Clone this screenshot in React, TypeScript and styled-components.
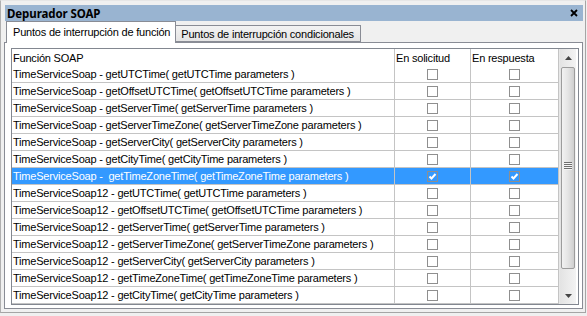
import styled, { createGlobalStyle } from "styled-components";

interface SoapRow {
    text: string
    request: boolean
    response: boolean
    selected?: boolean
}

const rows: SoapRow[] = [
    { text: "TimeServiceSoap - getUTCTime( getUTCTime parameters )", request: false, response: false },
    { text: "TimeServiceSoap - getOffsetUTCTime( getOffsetUTCTime parameters )", request: false, response: false },
    { text: "TimeServiceSoap - getServerTime( getServerTime parameters )", request: false, response: false },
    { text: "TimeServiceSoap - getServerTimeZone( getServerTimeZone parameters )", request: false, response: false },
    { text: "TimeServiceSoap - getServerCity( getServerCity parameters )", request: false, response: false },
    { text: "TimeServiceSoap - getCityTime( getCityTime parameters )", request: false, response: false },
    { text: "TimeServiceSoap -  getTimeZoneTime( getTimeZoneTime parameters )", request: true, response: true, selected: true },
    { text: "TimeServiceSoap12 - getUTCTime( getUTCTime parameters )", request: false, response: false },
    { text: "TimeServiceSoap12 - getOffsetUTCTime( getOffsetUTCTime parameters )", request: false, response: false },
    { text: "TimeServiceSoap12 - getServerTime( getServerTime parameters )", request: false, response: false },
    { text: "TimeServiceSoap12 - getServerTimeZone( getServerTimeZone parameters )", request: false, response: false },
    { text: "TimeServiceSoap12 - getServerCity( getServerCity parameters )", request: false, response: false },
    { text: "TimeServiceSoap12 - getTimeZoneTime( getTimeZoneTime parameters )", request: false, response: false },
    { text: "TimeServiceSoap12 - getCityTime( getCityTime parameters )", request: false, response: false },
];

const GlobalStyle = createGlobalStyle`
    html, body {
        margin: 0;
        padding: 0;
        background: #f0f0f0;
    }
    * {
        box-sizing: border-box;
    }
`;

const Window = styled.div`
    display: flex;
    flex-direction: column;
    width: 586px;
    height: 313px;
    padding: 4px 2px 3px 3px;
    background: #f0f0f0;
    border: 1px solid #a5a5a5;
    border-top-color: #e6e6e6;
    border-left-color: #b0b0b0;
    font-family: "Liberation Sans", Arial, sans-serif;
    font-size: 11px;
    letter-spacing: -0.2px;
    color: #000;
`;

const TitleBar = styled.div`
    display: flex;
    align-items: center;
    justify-content: space-between;
    height: 17px;
    margin-left: 1px;
    padding: 0 5px 0 2px;
    background: #99b4d1;
    font-family: "Noto Sans", "Liberation Sans", sans-serif;
    font-weight: 700;
    font-size: 11.5px;
    letter-spacing: -0.1px;
`;

const TabStrip = styled.div`
    display: flex;
    align-items: flex-end;
    height: 21px;
    padding-left: 2px;
    position: relative;
    z-index: 1;
`;

const Tab = styled.div<{ $active?: boolean }>`
    display: flex;
    align-items: center;
    height: ${p => (p.$active ? "22px" : "17px")};
    margin-bottom: ${p => (p.$active ? "-1px" : "0")};
    padding: ${p => (p.$active ? "0 5px 1px 6px" : "0 6px 0 5px")};
    border: 1px solid #898c95;
    border-bottom: ${p => (p.$active ? "none" : "1px solid #898c95")};
    border-left: ${p => (p.$active ? "1px solid #898c95" : "none")};
    background: ${p => (p.$active ? "#ffffff" : "linear-gradient(#f3f3f3, #e4e4e4)")};
    white-space: nowrap;
`;

const Panel = styled.div`
    flex: 1;
    display: flex;
    padding: 5px 3px 3px 6px;
    background: #ffffff;
    border: 1px solid #898c95;
`;

const List = styled.div`
    flex: 1;
    display: flex;
    height: 257px;
    border: 1px solid #828790;
    overflow: hidden;
`;

const Grid = styled.div`
    width: 547px;
    display: grid;
    grid-template-columns: 383px 76px 88px;
    grid-auto-rows: 17px;
    align-content: start;
`;

const HeaderCell = styled.div`
    display: flex;
    align-items: center;
    height: 18px;
    padding-left: 1px;
    border-right: 1px solid #c4c4c4;
    border-bottom: 1px solid #000;
    white-space: nowrap;
`;

const Cell = styled.div<{ $selected?: boolean; $center?: boolean }>`
    display: flex;
    align-items: center;
    justify-content: ${p => (p.$center ? "center" : "flex-start")};
    padding-left: ${p => (p.$center ? "0" : "1px")};
    border-right: 1px solid #c4c4c4;
    border-bottom: 1px solid #c4c4c4;
    background: ${p => (p.$selected ? "#3399ff" : "#ffffff")};
    color: ${p => (p.$selected ? "#ffffff" : "#000000")};
    white-space: pre;
    overflow: hidden;
`;

const Box = styled.span<{ $selected?: boolean }>`
    display: flex;
    align-items: center;
    justify-content: center;
    width: 11px;
    height: 11px;
    margin-right: 1px;
    border: 1px solid #8f8f8f;
    background: ${p => (p.$selected ? "#3399ff" : "#ffffff")};
`;

const ScrollBar = styled.div`
    width: 17px;
    display: flex;
    flex-direction: column;
    background: linear-gradient(to right, #e3e3e3, #f3f3f3);
    border-left: 1px solid #e8e8e8;
`;

const ScrollButton = styled.div`
    height: 17px;
    display: flex;
    align-items: center;
    justify-content: center;
`;

const Thumb = styled.div`
    height: 202px;
    margin: 1px 1px 0 1px;
    display: flex;
    align-items: center;
    justify-content: center;
    border: 1px solid #9c9c9c;
    border-radius: 2px;
    background: linear-gradient(to right, #f2f2f2 0%, #e4e4e4 50%, #cfcfcf 100%);
`;

const Grip = styled.div`
    width: 8px;
    height: 8px;
    margin-top: -5px;
    background: repeating-linear-gradient(#6f6f6f 0 1px, #f5f5f5 1px 2px);
`;

const Track = styled.div`
    flex: 1;
`;

function Arrow({ down }: { down?: boolean }) {
    return (
        <svg width="7" height="4" viewBox="0 0 7 4">
            <polygon points={down ? "0,0 7,0 3.5,4" : "0,4 7,4 3.5,0"} fill="#454545" />
        </svg>
    );
}

function Check() {
    return (
        <svg width="9" height="9" viewBox="0 0 9 9">
            <polyline points="1.5,4.5 3.5,6.5 7.5,2" fill="none" stroke="#ffffff" strokeWidth="2" />
        </svg>
    );
}

function CloseIcon() {
    return (
        <svg width="8" height="8" viewBox="0 0 8 8">
            <path d="M1 1 L7 7 M7 1 L1 7" stroke="#000" strokeWidth="1.8" />
        </svg>
    );
}

function CheckBox({ checked, selected }: { checked: boolean; selected?: boolean }) {
    return <Box $selected={selected}>{checked && <Check />}</Box>;
}

function App() {
    return (
        <>
            <GlobalStyle />
            <Window>
                <TitleBar>
                    <span>Depurador SOAP</span>
                    <CloseIcon />
                </TitleBar>
                <TabStrip>
                    <Tab $active>Puntos de interrupción de función</Tab>
                    <Tab>Puntos de interrupción condicionales</Tab>
                </TabStrip>
                <Panel>
                    <List>
                        <Grid>
                            <HeaderCell>Función SOAP</HeaderCell>
                            <HeaderCell>En solicitud</HeaderCell>
                            <HeaderCell>En respuesta</HeaderCell>
                            {rows.map(row => (
                                <>
                                    <Cell $selected={row.selected}>{row.text}</Cell>
                                    <Cell $selected={row.selected} $center>
                                        <CheckBox checked={row.request} selected={row.selected} />
                                    </Cell>
                                    <Cell $selected={row.selected} $center>
                                        <CheckBox checked={row.response} selected={row.selected} />
                                    </Cell>
                                </>
                            ))}
                        </Grid>
                        <ScrollBar>
                            <ScrollButton>
                                <Arrow />
                            </ScrollButton>
                            <Thumb>
                                <Grip />
                            </Thumb>
                            <Track />
                            <ScrollButton>
                                <Arrow down />
                            </ScrollButton>
                        </ScrollBar>
                    </List>
                </Panel>
            </Window>
        </>
    );
}

export default App;
